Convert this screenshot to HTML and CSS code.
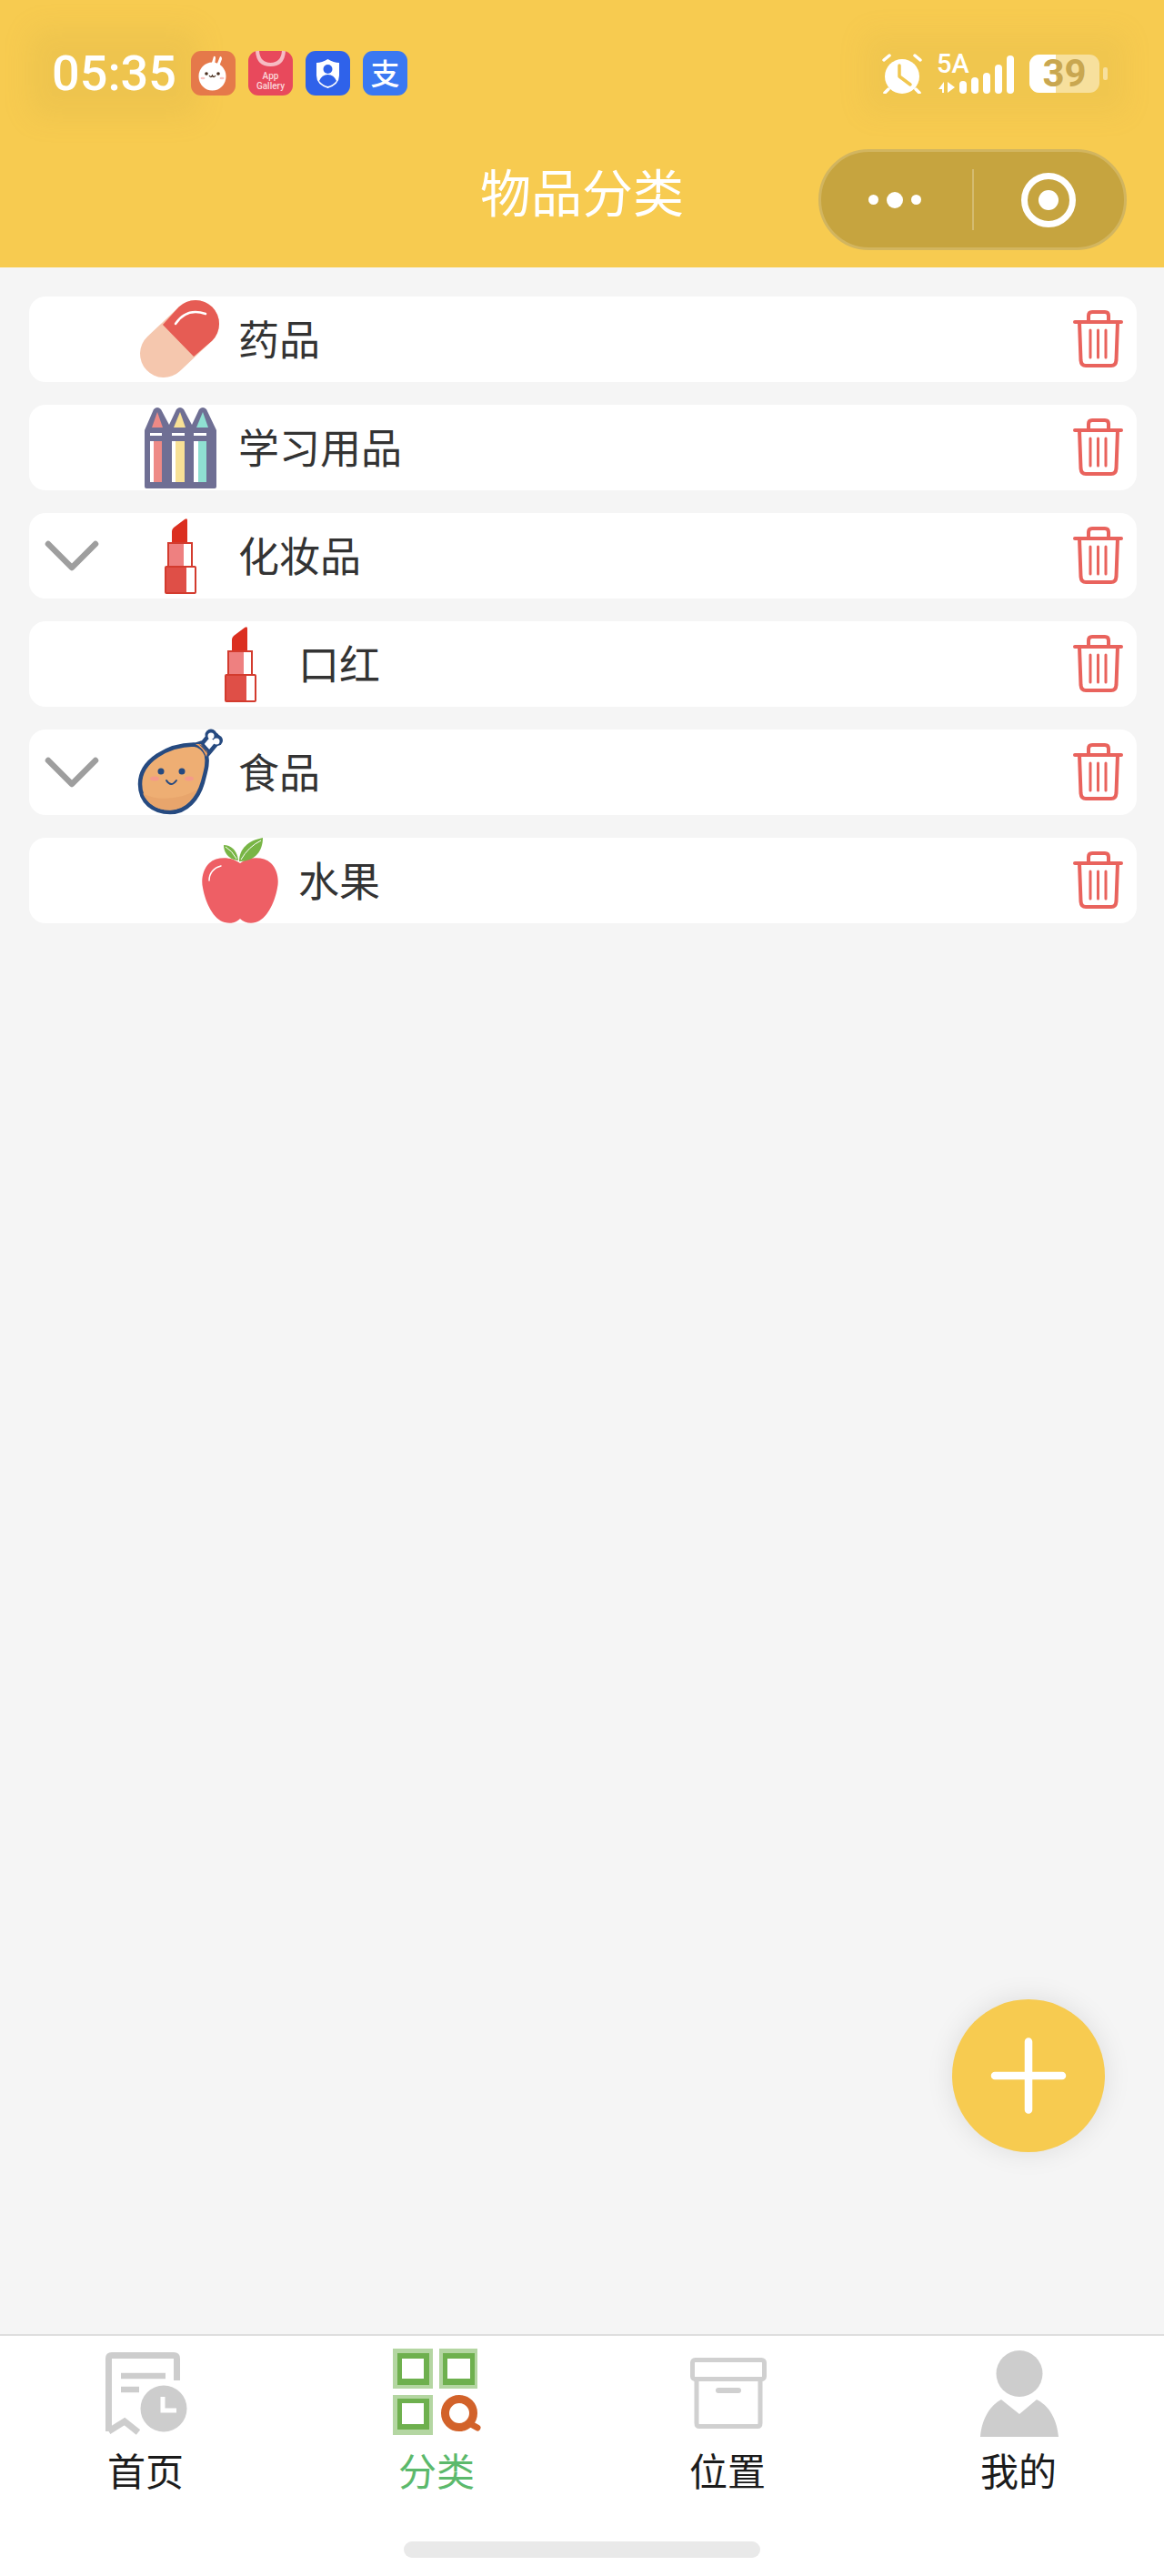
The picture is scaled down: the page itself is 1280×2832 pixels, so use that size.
FILE: index.html
```html
<!DOCTYPE html>
<html lang="zh">
<head>
    <meta charset="UTF-8">
    <title>物品分类</title>
    <link rel="stylesheet" href="styles.css">
</head>
<body>
    <svg class="sprite" xmlns="http://www.w3.org/2000/svg">
        <symbol id="i-chevron" viewBox="0 0 64 40">
            <path d="M6 7 L32 33 L58 7" fill="none" stroke="#9e9e9e" stroke-width="6.500" stroke-linecap="round" stroke-linejoin="round"/>
        </symbol>
        <symbol id="i-trash" viewBox="0 0 56 66">
            <g fill="none" stroke="#e9635d" stroke-linecap="round" stroke-linejoin="round">
                <path stroke-width="4" d="M3 14 H54"/>
                <path stroke-width="4" d="M18 14 V7 Q18 3 22 3 H36 Q40 3 40 7 V14"/>
                <path stroke-width="4" d="M8 14 L9.5 56 Q10 62 15 62 H43 Q48 62 48.5 56 L50 14"/>
                <path stroke-width="3" d="M20 23 V53 M28.500 23 V53 M37 23 V53"/>
            </g>
        </symbol>
        <symbol id="i-lipstick" viewBox="0 0 94 94">
            <path d="M38 33 V20 Q38 18 40 16 L52 7 Q55 5 55 8 V33 Z" fill="#db2f20"/>
            <rect x="34" y="33" width="26" height="26" fill="#ee8080" stroke="#d33b2e" stroke-width="2"/>
            <rect x="51" y="34" width="8" height="24" fill="#fff"/>
            <rect x="31" y="59" width="33" height="29" rx="1" fill="#df4f47" stroke="#d33b2e" stroke-width="2"/>
            <rect x="54" y="60" width="9" height="27" fill="#fff"/>
        </symbol>
    </svg>

    <header class="top">
        <div class="status">
            <div class="status-left">
                <span class="time">05:35</span>
                <div class="apps">
                    <svg class="app" viewBox="0 0 49 49">
                        <rect width="49" height="49" rx="11" fill="#e5794a"/>
                        <path d="M22 16 L25 6 Q27 5 27 8 L26 16 Z M28 16 L32 6 Q34 6 34 9 L31 17 Z" fill="#fff"/>
                        <ellipse cx="23.500" cy="28" rx="15" ry="15.500" fill="#fff"/>
                        <circle cx="17" cy="25" r="1.800" fill="#4a3020"/>
                        <circle cx="30" cy="25" r="1.800" fill="#4a3020"/>
                        <path d="M20 27 Q22 30 23.500 27 Q25 30 27 27" fill="none" stroke="#4a3020" stroke-width="1.300"/>
                        <ellipse cx="13" cy="30" rx="2.500" ry="1.300" fill="#f9c3c0"/>
                        <ellipse cx="34" cy="30" rx="2.500" ry="1.300" fill="#f9c3c0"/>
                    </svg>
                    <svg class="app" viewBox="0 0 49 49">
                        <rect width="49" height="49" rx="11" fill="#e8495c"/>
                        <path d="M10 0 Q11 15 24.500 15 Q38 15 39 0" fill="none" stroke="#f6bcc3" stroke-width="4"/>
                        <text class="app-txt" x="24.500" y="31" text-anchor="middle">App</text>
                        <text class="app-txt" x="24.500" y="42" text-anchor="middle">Gallery</text>
                    </svg>
                    <svg class="app" viewBox="0 0 49 49">
                        <rect width="49" height="49" rx="11" fill="#2f62ea"/>
                        <path d="M24.500 9 Q31 13 37 13 V27 Q37 37 24.500 41 Q12 37 12 27 V13 Q18 13 24.500 9 Z" fill="#fff"/>
                        <circle cx="24.500" cy="20" r="5" fill="#2f62ea"/>
                        <path d="M15 33 Q18 26 24.500 26 Q31 26 34 33 Q30 38 24.500 39 Q19 38 15 33 Z" fill="#2f62ea"/>
                    </svg>
                    <svg class="app" viewBox="0 0 49 49">
                        <rect width="49" height="49" rx="11" fill="#3a78f2"/>
                        <text class="app-zhi" x="24.500" y="37" text-anchor="middle">支</text>
                    </svg>
                </div>
            </div>
            <div class="status-right">
                <svg class="alarm" viewBox="0 0 44 44">
                    <circle cx="22" cy="25" r="19" fill="#fff"/>
                    <path d="M2 7 L8 2 M42 7 L36 2 M7 39 L3 43 M37 39 L41 43" stroke="#fff" stroke-width="3.500" stroke-linecap="round"/>
                    <path d="M19 13 V25 L31 34" fill="none" stroke="#f1c74f" stroke-width="3.500" stroke-linecap="round" stroke-linejoin="round"/>
                </svg>
                <svg class="net" viewBox="0 0 86 44">
                    <text class="net-txt" x="0" y="21">5A</text>
                    <path d="M8 31 V43 H6 V39 H2 Z M12 31 L20 37 L12 43 Z" fill="#fff"/>
                    <rect x="25" y="30" width="8" height="14" rx="4" fill="#fff"/>
                    <rect x="38" y="26" width="8" height="18" rx="4" fill="#fff"/>
                    <rect x="51" y="21" width="8" height="23" rx="4" fill="#fff"/>
                    <rect x="64" y="12" width="8" height="32" rx="4" fill="#fff"/>
                    <rect x="77" y="2" width="8" height="42" rx="4" fill="#fff"/>
                </svg>
                <div class="battery">
                    <div class="battery-body">
                        <div class="battery-fill"></div>
                        <span class="battery-num">39</span>
                    </div>
                    <div class="battery-tip"></div>
                </div>
            </div>
        </div>
        <div class="nav">
            <h1 class="title">物品分类</h1>
            <div class="capsule">
                <div class="capsule-dots">
                    <span class="dot"></span><span class="dot dot-big"></span><span class="dot"></span>
                </div>
                <div class="capsule-line"></div>
                <div class="capsule-ring"></div>
            </div>
        </div>
    </header>

    <main class="list">
        <div class="row">
            <div class="toggle"></div>
            <svg class="cat-icon" viewBox="0 0 94 94">
                <path d="M29 63 L64 30" stroke="#f5c7ae" stroke-width="52" stroke-linecap="round"/>
                <path d="M28 31 L45.600 11.600 A26 26 0 0 1 82.400 48.400 L62 66 Z" fill="#e65c54"/>
                <path d="M42 30 Q54 12 75 19" fill="none" stroke="#fff" stroke-width="2.500" stroke-linecap="round"/>
            </svg>
            <span class="name">药品</span>
            <svg class="trash"><use href="#i-trash"/></svg>
        </div>
        <div class="row">
            <div class="toggle"></div>
            <svg class="cat-icon" viewBox="0 0 94 94">
                <path d="M8 28 L18 5 Q22 1 26 5 L35 22 L43 5 Q47 1 51 5 L60 22 L68 5 Q72 1 76 5 L87 28 V90 Q87 92 85 92 H10 Q8 92 8 90 Z" fill="#6f6f94"/>
                <path d="M22 8 L28 25 H16 Z" fill="#ee8a86"/>
                <path d="M47 8 L53 25 H40 Z" fill="#f8e196"/>
                <path d="M72 8 L78 25 H65 Z" fill="#8fe0d2"/>
                <rect x="14" y="31" width="13" height="3" fill="#fff"/>
                <rect x="38" y="31" width="14" height="3" fill="#fff"/>
                <rect x="62" y="31" width="14" height="3" fill="#fff"/>
                <rect x="14" y="40" width="13" height="45" fill="#ee8a86"/>
                <rect x="14" y="40" width="4" height="45" fill="#fff"/>
                <rect x="38" y="40" width="14" height="45" fill="#f8e196"/>
                <rect x="38" y="40" width="4" height="45" fill="#fff"/>
                <rect x="62" y="40" width="14" height="45" fill="#8fe0d2"/>
                <rect x="62" y="40" width="5" height="45" fill="#fff"/>
            </svg>
            <span class="name">学习用品</span>
            <svg class="trash"><use href="#i-trash"/></svg>
        </div>
        <div class="row">
            <div class="toggle"><svg class="chevron"><use href="#i-chevron"/></svg></div>
            <svg class="cat-icon"><use href="#i-lipstick"/></svg>
            <span class="name">化妆品</span>
            <svg class="trash"><use href="#i-trash"/></svg>
        </div>
        <div class="row child">
            <div class="toggle"></div>
            <svg class="cat-icon"><use href="#i-lipstick"/></svg>
            <span class="name">口红</span>
            <svg class="trash"><use href="#i-trash"/></svg>
        </div>
        <div class="row">
            <div class="toggle"><svg class="chevron"><use href="#i-chevron"/></svg></div>
            <svg class="cat-icon" viewBox="0 0 94 94">
                <path d="M73 23 L83 11" stroke="#264a80" stroke-width="17" stroke-linecap="round"/>
                <circle cx="81" cy="6" r="6.500" fill="#264a80"/>
                <circle cx="88" cy="12" r="6" fill="#264a80"/>
                <path d="M73 23 L83 11" stroke="#fff" stroke-width="8"/>
                <circle cx="81" cy="7" r="3.500" fill="#fff"/>
                <circle cx="87" cy="13" r="3.500" fill="#fff"/>
                <path d="M64 16 L70 14 L79 24 L76 30 Z" fill="#ef9f5f" stroke="#264a80" stroke-width="3"/>
                <path d="M62 16.500 C34 17 3 34 3 60 C3 80 18 91 36 91 C55 91 67 75 72 58 C75 46 78 38 76 28 Q72 18 62 16.500 Z" fill="#eeae73" stroke="#264a80" stroke-width="4.500"/>
                <path d="M64 16 L68 16 L77 26 L76 30 Q72 20 64 16 Z" fill="#ef9f5f"/>
                <path d="M6 70 C22 80 50 76 66 66 C60 78 50 88 36 88.500 C22 89 11 82 6 70 Z" fill="#e8a56c"/>
                <circle cx="26" cy="46" r="3.500" fill="#264a80"/>
                <circle cx="49" cy="46" r="3.500" fill="#264a80"/>
                <ellipse cx="19" cy="54" rx="5" ry="2.500" fill="#f59a8a"/>
                <ellipse cx="57" cy="54" rx="5" ry="2.500" fill="#f59a8a"/>
                <path d="M32 56 Q37 64 43 56" fill="none" stroke="#264a80" stroke-width="2" stroke-linecap="round"/>
            </svg>
            <span class="name">食品</span>
            <svg class="trash"><use href="#i-trash"/></svg>
        </div>
        <div class="row child">
            <div class="toggle"></div>
            <svg class="cat-icon" viewBox="0 0 94 94">
                <path d="M47 28 C38 21 22 20 13 28 C6 35 4 46 6 55 C9 72 18 90 30 93 C37 95 43 93 47 89 C51 93 58 95 64 93 C76 90 85 72 88 55 C90 46 88 35 81 28 C72 20 56 21 47 28 Z" fill="#ee5f65"/>
                <path d="M46 26 C46 12 56 3 72 0 C72 14 64 26 46 26 Z" fill="#78b545"/>
                <path d="M45 25 C44 15 38 8 29 8 C29 16 34 24 45 25 Z" fill="#78b545"/>
                <path d="M48 24 Q56 10 70 3 M43 23 Q38 14 31 10" fill="none" stroke="#fff" stroke-width="1"/>
                <path d="M13 47 C13 39 18 33 26 31" fill="none" stroke="#fff" stroke-width="1.500" stroke-linecap="round"/>
            </svg>
            <span class="name">水果</span>
            <svg class="trash"><use href="#i-trash"/></svg>
        </div>
        <div class="add">
            <svg class="add-plus" viewBox="0 0 84 84">
                <path d="M42 4.500 V79.500 M5 42 H79" stroke="#fff" stroke-width="8.500" stroke-linecap="round"/>
            </svg>
        </div>
    </main>

    <footer class="tabbar">
        <nav class="tabs">
            <div class="tab">
                <svg class="tab-icon" viewBox="-4 0 104 100">
                    <g fill="none" stroke="#cdcdcd" stroke-width="7">
                        <path d="M7.500 91 V11 Q7.500 7.500 11 7.500 H79 Q82.500 7.500 82.500 11 V35"/>
                        <path d="M7.500 91 L25 80 L40 92"/>
                        <path d="M21 30 H70 M21 45 H41" stroke-width="6.500"/>
                    </g>
                    <circle cx="68" cy="66" r="25.500" fill="#cdcdcd"/>
                    <path d="M67 53 V68 H82" fill="none" stroke="#fff" stroke-width="5"/>
                </svg>
                <span class="tab-name">首页</span>
            </div>
            <div class="tab active">
                <svg class="tab-icon" viewBox="0 0 104 100">
                    <rect x="4" y="0" width="44" height="44" fill="#b4d6a2"/>
                    <rect x="9" y="5" width="35" height="35" fill="#6eb04e"/>
                    <rect x="14" y="11" width="24" height="22" fill="#fff"/>
                    <rect x="55" y="0" width="42" height="44" fill="#b4d6a2"/>
                    <rect x="59" y="5" width="35" height="35" fill="#6eb04e"/>
                    <rect x="64" y="11" width="25" height="22" fill="#fff"/>
                    <rect x="4" y="51" width="44" height="44" fill="#b4d6a2"/>
                    <rect x="9" y="55" width="35" height="34" fill="#6eb04e"/>
                    <rect x="14" y="60" width="24" height="23" fill="#fff"/>
                    <circle cx="77" cy="71" r="15.500" fill="none" stroke="#d2622a" stroke-width="9"/>
                    <path d="M88 82 L97 87" stroke="#d2622a" stroke-width="7" stroke-linecap="round"/>
                </svg>
                <span class="tab-name">分类</span>
            </div>
            <div class="tab">
                <svg class="tab-icon" viewBox="0 0 104 100">
                    <g fill="none" stroke="#d0d0d0" stroke-width="5">
                        <rect x="13.500" y="12.500" width="79" height="21" rx="3"/>
                        <path d="M18 35 V82 Q18 85.500 21 85.500 H85 Q88 85.500 88 82 V35"/>
                        <path d="M42 46 H64" stroke-width="6" stroke-linecap="round"/>
                    </g>
                </svg>
                <span class="tab-name">位置</span>
            </div>
            <div class="tab">
                <svg class="tab-icon" viewBox="0 0 104 100">
                    <circle cx="53" cy="27.500" r="25.500" fill="#cdcdcd"/>
                    <path d="M10 97 C12 75 22 62 33 56 L53 72 L72 56 C84 62 94 75 96 97 Z" fill="#cdcdcd"/>
                </svg>
                <span class="tab-name">我的</span>
            </div>
        </nav>
        <div class="home-bar"></div>
    </footer>
</body>
</html>
```

FILE: styles.css
```css
*{
    margin: 0;
    padding: 0;
    box-sizing: border-box;
}
body{
    width: 1280px;
    height: 2832px;
    display: flex;
    flex-direction: column;
    overflow: hidden;
    background: #f5f5f5;
    font-family: "Noto Sans CJK SC", "Noto Sans", sans-serif;
}
.sprite{
    position: absolute;
    width: 0;
    height: 0;
}

/* top */
.top{
    height: 294px;
    padding-top: 56px;
    background: #f7cb50;
    color: #fff;
}
.status{
    display: flex;
    justify-content: space-between;
    height: 49px;
    padding: 0 62px 0 57px;
}
.status-left{
    display: flex;
    align-items: center;
    gap: 16px;
}
.time{
    font-family: Roboto, sans-serif;
    font-size: 54px;
    font-weight: 500;
    line-height: 49px;
    background: rgba(190, 160, 70, 0.16);
    box-shadow: 0 0 30px 22px rgba(190, 160, 70, 0.16);
}
.apps{
    display: flex;
    gap: 14px;
}
.app{
    width: 49px;
    height: 49px;
    overflow: visible;
}
.app-txt{
    font-family: Roboto, sans-serif;
    font-size: 10px;
    font-weight: 500;
    fill: #fbd7da;
}
.app-zhi{
    font-size: 32px;
    font-weight: 500;
    fill: #fff;
}
.status-right{
    display: flex;
    align-items: center;
    gap: 16px;
    background: rgba(190, 160, 70, 0.1);
    box-shadow: 0 0 30px 20px rgba(190, 160, 70, 0.1);
}
.alarm{
    width: 44px;
    height: 44px;
}
.net{
    width: 86px;
    height: 44px;
    overflow: visible;
}
.net-txt{
    font-family: Roboto, sans-serif;
    font-size: 29px;
    font-weight: 500;
    fill: #fff;
}
.battery{
    display: flex;
    align-items: center;
    gap: 4px;
}
.battery-body{
    position: relative;
    display: flex;
    align-items: center;
    justify-content: center;
    width: 77px;
    height: 42px;
    border-radius: 11px;
    background: rgba(255, 255, 255, 0.45);
}
.battery-fill{
    position: absolute;
    left: 0;
    top: 0;
    bottom: 0;
    width: 29px;
    border-radius: 11px 0 0 11px;
    background: #fff;
}
.battery-num{
    position: relative;
    font-family: Roboto, sans-serif;
    font-size: 42px;
    font-weight: 700;
    line-height: 42px;
    color: #c9a750;
}
.battery-tip{
    width: 5px;
    height: 14px;
    border-radius: 2px;
    background: rgba(255, 255, 255, 0.45);
}
.nav{
    display: grid;
    grid-template-columns: 1fr auto 1fr;
    align-items: center;
    margin-top: 59px;
}
.title{
    grid-column: 2;
    align-self: start;
    font-size: 56px;
    font-weight: 400;
    line-height: 89px;
}
.capsule{
    grid-column: 3;
    justify-self: end;
    display: flex;
    align-items: center;
    width: 339px;
    height: 111px;
    margin-right: 41px;
    border: 3px solid #d2b55f;
    border-radius: 56px;
    background: #c6a43f;
}
.capsule-dots{
    display: flex;
    align-items: center;
    justify-content: center;
    gap: 9px;
    width: 162px;
    margin-right: 4px;
}
.dot{
    width: 11px;
    height: 11px;
    border-radius: 50%;
    background: #fff;
}
.dot-big{
    width: 18px;
    height: 18px;
}
.capsule-line{
    width: 2px;
    height: 67px;
    background: #d4bb70;
}
.capsule-ring{
    position: relative;
    width: 60px;
    height: 60px;
    margin-left: 52px;
    border: 7px solid #fff;
    border-radius: 50%;
}
.capsule-ring::after{
    content: "";
    position: absolute;
    left: 12px;
    top: 12px;
    width: 22px;
    height: 22px;
    border-radius: 50%;
    background: #fff;
}

/* list */
.list{
    position: relative;
    flex: 1;
    display: flex;
    flex-direction: column;
    gap: 25px;
    padding: 32px 30px 0 32px;
}
.row{
    display: flex;
    align-items: center;
    height: 94px;
    border-radius: 18px;
    background: #fff;
}
.toggle{
    flex: none;
    display: flex;
    align-items: center;
    width: 119px;
    padding-left: 15px;
}
.row.child .toggle{
    width: 185px;
}
.chevron{
    width: 64px;
    height: 40px;
}
.cat-icon{
    flex: none;
    width: 94px;
    height: 94px;
    overflow: visible;
}
.name{
    margin-left: 17px;
    padding-bottom: 4px;
    font-size: 45px;
    color: #333;
}
.trash{
    flex: none;
    width: 56px;
    height: 66px;
    margin-left: auto;
    margin-right: 15px;
}
.add{
    position: absolute;
    left: 1047px;
    top: 1904px;
    display: flex;
    align-items: center;
    justify-content: center;
    width: 168px;
    height: 168px;
    border-radius: 50%;
    background: #f7cb50;
    box-shadow: 0 0 30px rgba(0, 0, 0, 0.1);
}
.add-plus{
    width: 84px;
    height: 84px;
}

/* tabbar */
.tabbar{
    display: flex;
    flex-direction: column;
    height: 266px;
    border-top: 2px solid #dedede;
    background: #fff;
}
.tabs{
    display: grid;
    grid-template-columns: repeat(4, 1fr);
    padding-top: 14px;
}
.tab{
    display: flex;
    flex-direction: column;
    align-items: center;
}
.tab-icon{
    width: 104px;
    height: 100px;
}
.tab-name{
    margin-top: 5px;
    font-size: 42px;
    line-height: 56px;
    color: #1c1c1c;
}
.tab.active .tab-name{
    color: #5cb96c;
}
.home-bar{
    width: 392px;
    height: 18px;
    margin: 51px auto 0;
    border-radius: 9px;
    background: #e9e9e9;
}
```
